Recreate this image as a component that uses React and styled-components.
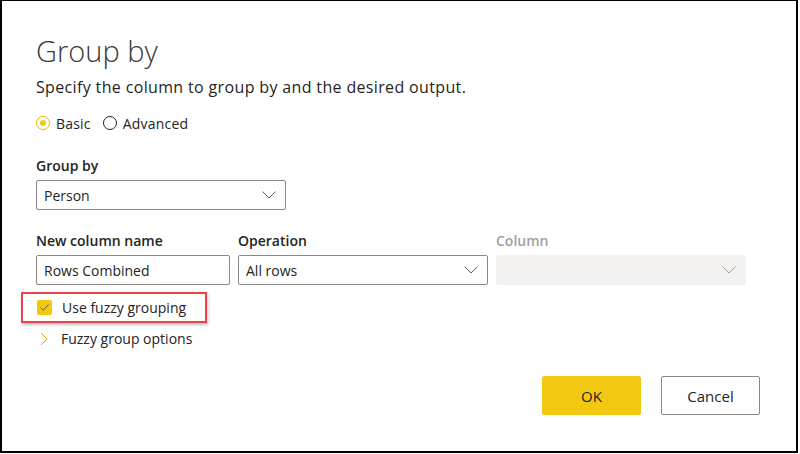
import styled, { createGlobalStyle } from "styled-components"

const Global = createGlobalStyle`
  body {
    margin: 0;
    background: #fff;
    font-family: "Open Sans", "Noto Sans", sans-serif;
    color: #252423;
  }
`

const Frame = styled.div`
  box-sizing: border-box;
  width: 798px;
  height: 453px;
  border-top: 1px solid #000;
  border-left: 2px solid #000;
  border-right: 2px solid #000;
  border-bottom: 2px solid #000;
  padding: 30px 0 0 34px;
  display: flex;
  flex-direction: column;
`

const Title = styled.h1`
  margin: 0;
  font-weight: 300;
  font-size: 29px;
  line-height: 40px;
  color: #3b3a39;
`

const Subtitle = styled.p`
  margin: 5px 0 0;
  font-size: 16px;
  line-height: 22px;
  letter-spacing: 0.35px;
  color: #252423;
`

const RadioRow = styled.div`
  display: flex;
  align-items: center;
  gap: 12px;
  margin-top: 16px;
  height: 18px;
`

const RadioLabel = styled.label`
  display: flex;
  align-items: center;
  gap: 6px;
  font-size: 14px;
  letter-spacing: 0.2px;
  color: #252423;
`

const Radio = styled.span`
  box-sizing: border-box;
  width: 14px;
  height: 14px;
  border-radius: 50%;
  border: 1px solid ${p => (p.checked ? "#e8b800" : "#252423")};
  display: flex;
  align-items: center;
  justify-content: center;
  &::after {
    content: "";
    width: 6px;
    height: 6px;
    border-radius: 50%;
    background: ${p => (p.checked ? "#f2c811" : "transparent")};
  }
`

const Field = styled.div`
  display: flex;
  flex-direction: column;
  width: ${p => p.w}px;
`

const Label = styled.div`
  font-size: 14px;
  font-weight: 600;
  line-height: 20px;
  height: 20px;
  color: ${p => (p.disabled ? "#a19f9d" : "#252423")};
  margin-bottom: 4px;
`

const Box = styled.div`
  box-sizing: border-box;
  height: 30px;
  display: flex;
  align-items: center;
  justify-content: space-between;
  padding: 0 9px 0 7px;
  border-radius: 2px;
  border: 1px solid ${p => (p.disabled ? "#f3f2f1" : "#8a8886")};
  background: ${p => (p.disabled ? "#f3f2f1" : "#fff")};
  font-size: 14px;
  color: #252423;
`

const GroupSection = styled.div`
  margin-top: 24px;
`

const FieldRow = styled.div`
  display: flex;
  gap: 8px;
  margin-top: 21px;
`

const Highlight = styled.div`
  align-self: flex-start;
  box-sizing: border-box;
  width: 186px;
  height: 31px;
  margin: 7px 0 0 -15px;
  padding-left: 14px;
  border: 2px solid #e9434a;
  box-shadow: 1px 2px 3px rgba(0, 0, 0, 0.25);
  display: flex;
  align-items: center;
  gap: 10px;
  font-size: 14px;
`

const Check = styled.span`
  width: 15px;
  height: 15px;
  border-radius: 2px;
  background: #f2c811;
  display: flex;
  align-items: center;
  justify-content: center;
`

const Expander = styled.div`
  display: flex;
  align-items: center;
  gap: 13px;
  margin: 6px 0 0 4px;
  font-size: 14px;
  color: #252423;
`

const Footer = styled.div`
  display: flex;
  justify-content: flex-end;
  gap: 20px;
  margin: 28px 36px 0 0;
`

const Button = styled.button`
  box-sizing: border-box;
  width: 99px;
  height: 39px;
  border-radius: 2px;
  font-family: inherit;
  font-size: 15px;
  color: #252423;
  border: 1px solid ${p => (p.primary ? "#f2c811" : "#8a8886")};
  background: ${p => (p.primary ? "#f2c811" : "#fff")};
`

const Chevron = ({ color = "#605e5c" }) => (
  <svg width="14" height="8" viewBox="0 0 14 8">
    <path d="M0.5 0.5 L7 7 L13.5 0.5" fill="none" stroke={color} strokeWidth="1" />
  </svg>
)

export default function App() {
  return (
    <>
      <Global />
      <Frame>
        <Title>Group by</Title>
        <Subtitle>Specify the column to group by and the desired output.</Subtitle>
        <RadioRow>
          <RadioLabel><Radio checked />Basic</RadioLabel>
          <RadioLabel><Radio />Advanced</RadioLabel>
        </RadioRow>

        <GroupSection>
          <Field w={250}>
            <Label>Group by</Label>
            <Box>Person<Chevron /></Box>
          </Field>
        </GroupSection>

        <FieldRow>
          <Field w={194}>
            <Label>New column name</Label>
            <Box>Rows Combined</Box>
          </Field>
          <Field w={250}>
            <Label>Operation</Label>
            <Box>All rows<Chevron /></Box>
          </Field>
          <Field w={250}>
            <Label disabled>Column</Label>
            <Box disabled><span /><Chevron color="#a19f9d" /></Box>
          </Field>
        </FieldRow>

        <Highlight>
          <Check>
            <svg width="11" height="9" viewBox="0 0 11 9">
              <path d="M1.5 4.5 L4.2 7.2 L9.5 1.5" fill="none" stroke="#605e5c" strokeWidth="1" />
            </svg>
          </Check>
          Use fuzzy grouping
        </Highlight>

        <Expander>
          <svg width="8" height="14" viewBox="0 0 8 14">
            <path d="M1 1 L7 7 L1 13" fill="none" stroke="#e0a500" strokeWidth="1" />
          </svg>
          Fuzzy group options
        </Expander>

        <Footer>
          <Button primary>OK</Button>
          <Button>Cancel</Button>
        </Footer>
      </Frame>
    </>
  )
}
